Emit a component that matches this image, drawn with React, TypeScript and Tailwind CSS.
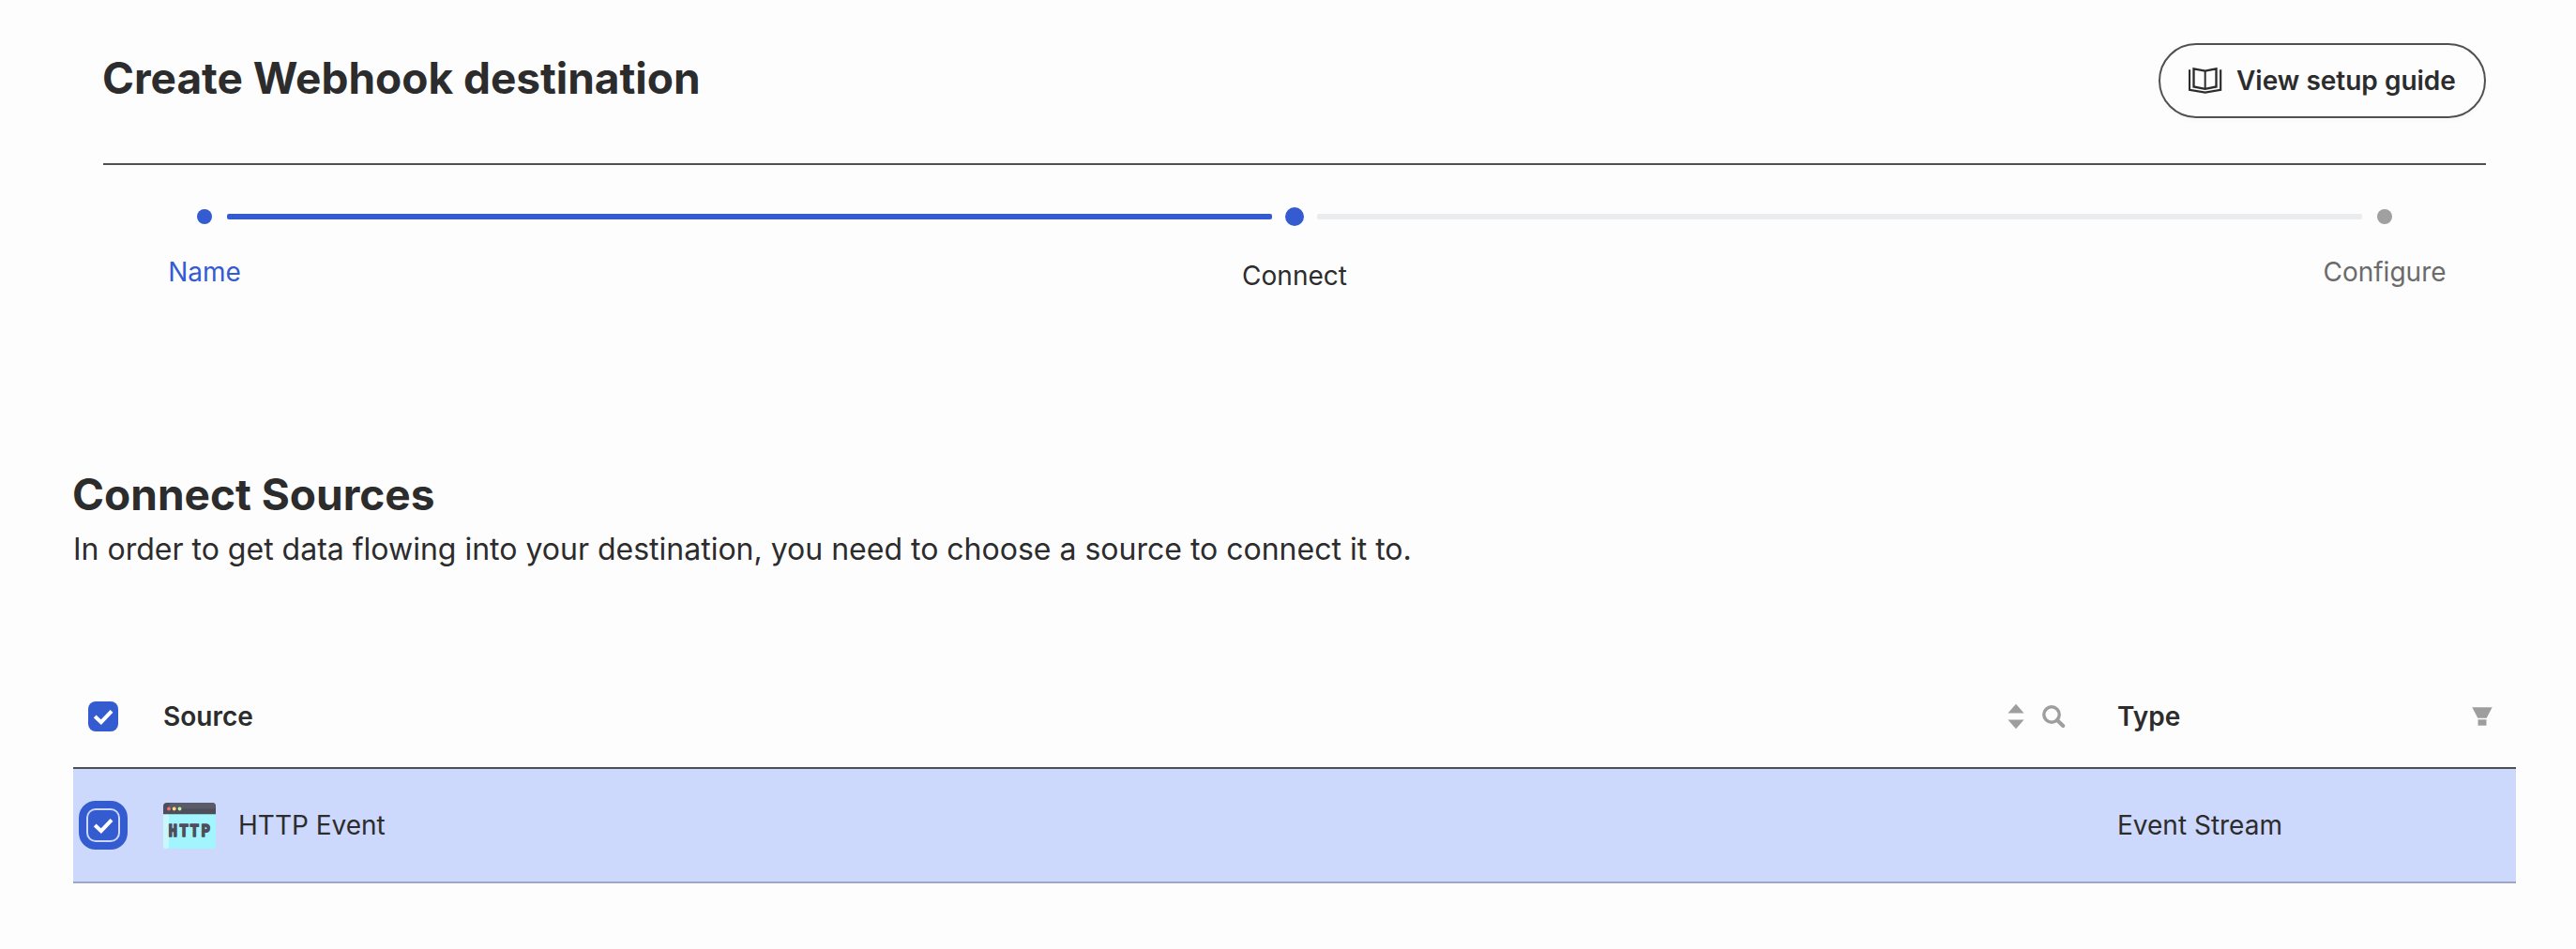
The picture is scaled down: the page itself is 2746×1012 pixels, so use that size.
import clsx from "clsx";

const STEPS = [
  { label: "Name", state: "done" },
  { label: "Connect", state: "current" },
  { label: "Configure", state: "upcoming" },
];

const SOURCES = [{ id: "http-event", name: "HTTP Event", type: "Event Stream" }];

function BookIcon()
{
  return (
    <svg width="36" height="28" viewBox="0 0 108 84" fill="none" stroke="#2c2c2d">
      <path d="M16.500 4 53 11 88.500 4V61.500L53 68.500 16.500 61.500Z" strokeWidth="7" />
      <path d="M53 11V68" strokeWidth="6" />
      <path d="M3 7V71.500L53 80 102.500 71.500V7" strokeWidth="6.500" />
    </svg>
  );
}

function SortIcon()
{
  return (
    <svg width="18" height="28" viewBox="0 0 18 28" fill="#9e9e9e">
      <path d="M9 .8 17.600 10.600H.4Z" />
      <path d="M9 27.300 .4 17.500H17.600Z" />
    </svg>
  );
}

function SearchIcon()
{
  return (
    <svg width="25" height="25" viewBox="0 0 25 25" fill="none" stroke="#9e9e9e">
      <circle cx="10" cy="10" r="8.200" strokeWidth="3.400" />
      <path d="M16 16 22.200 22" strokeWidth="4" strokeLinecap="round" />
    </svg>
  );
}

function FilterIcon()
{
  return (
    <svg width="22" height="20" viewBox="0 0 22 20" fill="#9e9e9e">
      <path d="M.3 .3H21.700L15.700 11.700H6.300Z" />
      <path d="M6.500 13.300H15.500V19.700H6.500Z" />
    </svg>
  );
}

function HttpIcon()
{
  return (
    <svg width="56" height="49" viewBox="0 0 56 49" className="block">
      <path d="M0 12H56V46a3 3 0 0 1-3 3H3a3 3 0 0 1-3-3Z" fill="#a2f5fc" />
      <path d="M0 12H6V46a3 3 0 0 1-3 3a3 3 0 0 1-3-3Z" fill="#c8f8fe" />
      <path d="M0 12.300V4a4 4 0 0 1 4-4H52a4 4 0 0 1 4 4V12.300Z" fill="#4e4d5a" />
      <path d="M6 6.500V4a4 4 0 0 1 4-4H52a4 4 0 0 1 4 3.500a3 3 0 0 1-3 3Z" fill="#5a5b69" />
      <circle cx="6" cy="6.500" r="1.900" fill="#f17079" />
      <circle cx="11.700" cy="6.500" r="1.900" fill="#fbe07c" />
      <circle cx="17.500" cy="6.500" r="1.900" fill="#bdf09b" />
      <text
        x="13.200 28.200 42.700 58"
        y="36.200"
        transform="scale(.78 1)"
        textAnchor="middle"
        className="font-['Liberation_Mono'] text-[20.500px] font-bold"
        fill="#4e4d5a"
        stroke="#4e4d5a"
        strokeWidth="1.600"
        strokeLinejoin="round"
      >
        HTTP
      </text>
    </svg>
  );
}

function Checkbox({ focused = false }: { focused?: boolean })
{
  return (
    <div
      className={clsx(
        "w-8 h-8 rounded-lg bg-[#355bd0]",
        focused && "shadow-[0_0_0_2px_#ccd8fc,0_0_0_10px_#355bd0]"
      )}
    >
      <svg width="32" height="32" viewBox="0 0 32 32" fill="none" stroke="#fff" strokeWidth="4">
        <path d="M7.200 16 13.800 22.200 25 10.300" />
      </svg>
    </div>
  );
}

function Stepper()
{
  return (
    <div className="flex items-start justify-between mx-[31px] mt-[45px]">
      {STEPS.map((step, i) => (
        <div key={step.label} className={clsx("flex items-start", i > 0 && "flex-1")}>
          {i > 0 && (
            <div
              className={clsx(
                "flex-1 h-1.5 mt-[7px] rounded-[2px] -mx-[53px]",
                step.state === "current" ? "bg-[#355bd0]" : "bg-[#ebecee]"
              )}
            />
          )}
          <div className="w-[154px] flex flex-col items-center">
            <div className="h-5 flex items-center">
              <div
                className={clsx(
                  "rounded-full",
                  step.state === "done" && "w-4 h-4 bg-[#355bd0]",
                  step.state === "current" && "w-5 h-5 bg-[#355bd0]",
                  step.state === "upcoming" && "w-4 h-4 bg-[#a0a0a0]"
                )}
              />
            </div>
            <div
              className={clsx(
                "text-[28px] leading-[40px]",
                step.state === "done" && "mt-[29px] text-[#355bd0]",
                step.state === "current" && "mt-[33px] text-[#2c2c2d]",
                step.state === "upcoming" && "mt-[29px] text-[#6b6b6b]"
              )}
            >
              {step.label}
            </div>
          </div>
        </div>
      ))}
    </div>
  );
}

export default function App()
{
  return (
    <div className="min-h-[1012px] bg-[#fdfdfe] text-[#2c2c2d] font-['Inter',sans-serif] overflow-hidden">
      <header className="ml-[110px] w-[2540px]">
        <div className="h-[176px] pt-[46px] flex items-start justify-between border-b-2 border-[#505053]">
          <h1 className="text-[46px] leading-[56px] mt-[9px] -ml-px font-[650] -tracking-[0.03px] whitespace-nowrap">
            Create Webhook destination
          </h1>
          <button className="w-[349px] h-20 pl-[30px] flex items-center rounded-full border-2 border-[#505053] shadow-[0_4px_4px_rgba(0,0,0,0.015)]">
            <BookIcon />
            <span className="ml-[15px] text-[28px] font-semibold whitespace-nowrap">View setup guide</span>
          </button>
        </div>
        <Stepper />
      </header>

      <main className="ml-[78px] w-[2604px] mt-[185px]">
        <h2 className="text-[46px] leading-[56px] font-[650] -ml-px">Connect Sources</h2>
        <p className="mt-[7px] text-[32px] leading-[48px]">
          In order to get data flowing into your destination, you need to choose a source to connect it to.
        </p>

        <div className="mt-[100px]">
          <div className="h-[110px] flex items-center border-b-2 border-[#505053] text-[28px] font-semibold">
            <div className="w-24 pl-4">
              <Checkbox />
            </div>
            <div className="flex-1 flex items-center">
              <span>Source</span>
              <div className="ml-auto mr-[55px] flex items-center gap-[19px]">
                <SortIcon />
                <SearchIcon />
              </div>
            </div>
            <div className="w-[425px] pr-[25px] flex items-center justify-between">
              <span>Type</span>
              <FilterIcon />
            </div>
          </div>
          {SOURCES.map((source) => (
            <div key={source.id} className="h-[122px] flex items-center bg-[#ccd8fc] border-b-2 border-[#9ea7c6] text-[28px]">
              <div className="w-24 pl-4">
                <Checkbox focused />
              </div>
              <div className="flex-1 flex items-center gap-6">
                <HttpIcon />
                <span>{source.name}</span>
              </div>
              <div className="w-[425px]">{source.type}</div>
            </div>
          ))}
        </div>
      </main>
    </div>
  );
}
